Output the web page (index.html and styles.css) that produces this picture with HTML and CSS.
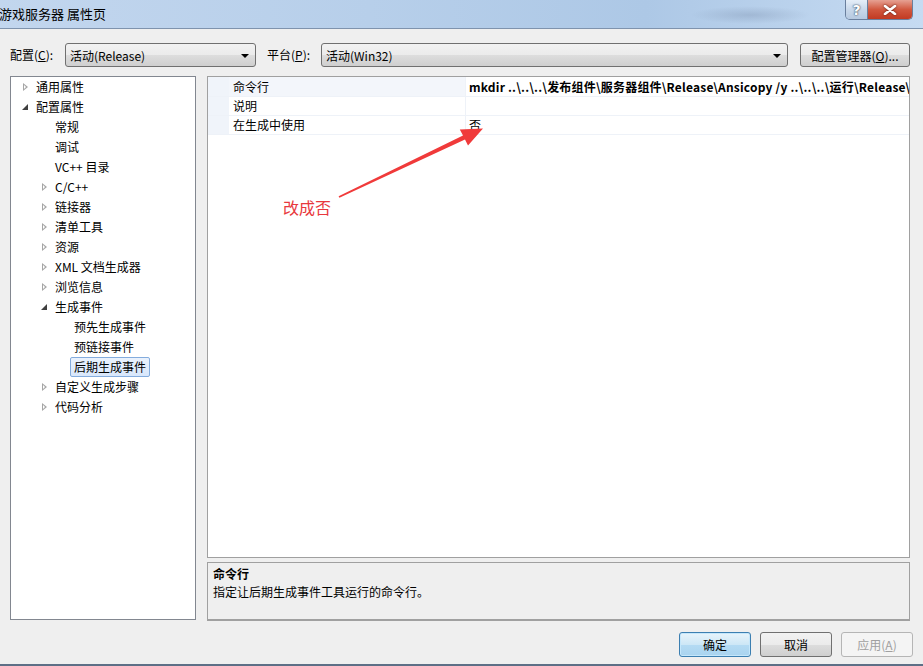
FILE: index.html
```html
<!DOCTYPE html>
<html>
<head>
<meta charset="utf-8">
<link rel="stylesheet" href="styles.css">
</head>
<body>
<div class="window">
  <div class="titlebar">
    <span class="title">游戏服务器 属性页</span>
    <div class="blur"></div>
    <div class="capbtns">
      <div class="capbtn help">?</div>
      <div class="capbtn close">
        <svg width="14" height="10" viewBox="0 0 14 10"><path d="M2 1 L12 9 M12 1 L2 9" stroke="#fff" stroke-width="2.6" stroke-linecap="round"/></svg>
      </div>
    </div>
  </div>
  <div class="content">
    <div class="toprow">
      <span class="lbl">配置(<u>C</u>):</span>
      <div class="combo c1"><span>活动(Release)</span><i class="caret"></i></div>
      <span class="lbl lbl2">平台(<u>P</u>):</span>
      <div class="combo c2"><span>活动(Win32)</span><i class="caret"></i></div>
      <div class="btn cfg">配置管理器(<u>O</u>)...</div>
    </div>
    <div class="main">
      <div class="tree">
        <div class="ti l0"><i class="arr closed"></i>通用属性</div>
        <div class="ti l0"><i class="arr open"></i>配置属性</div>
        <div class="ti l1">常规</div>
        <div class="ti l1">调试</div>
        <div class="ti l1">VC++ 目录</div>
        <div class="ti l1"><i class="arr closed"></i>C/C++</div>
        <div class="ti l1"><i class="arr closed"></i>链接器</div>
        <div class="ti l1"><i class="arr closed"></i>清单工具</div>
        <div class="ti l1"><i class="arr closed"></i>资源</div>
        <div class="ti l1"><i class="arr closed"></i>XML 文档生成器</div>
        <div class="ti l1"><i class="arr closed"></i>浏览信息</div>
        <div class="ti l1"><i class="arr open"></i>生成事件</div>
        <div class="ti l2">预先生成事件</div>
        <div class="ti l2">预链接事件</div>
        <div class="ti l2"><span class="sel">后期生成事件</span></div>
        <div class="ti l1"><i class="arr closed"></i>自定义生成步骤</div>
        <div class="ti l1"><i class="arr closed"></i>代码分析</div>
      </div>
      <div class="right">
        <div class="grid">
          <div class="row first"><div class="gut"></div><div class="name">命令行</div><div class="val bold">mkdir ..\..\..\发布组件\服务器组件\Release\Ansicopy /y ..\..\..\运行\Release\</div></div>
          <div class="row"><div class="gut"></div><div class="name">说明</div><div class="val"></div></div>
          <div class="row"><div class="gut"></div><div class="name">在生成中使用</div><div class="val">否</div></div>
        </div>
        <div class="desc">
          <div class="dtitle">命令行</div>
          <div class="dtext">指定让后期生成事件工具运行的命令行。</div>
        </div>
      </div>
    </div>
    <div class="footer">
      <div class="btn ok">确定</div>
      <div class="btn">取消</div>
      <div class="btn disabled">应用(<u>A</u>)</div>
    </div>
  </div>
  <svg class="annot-arrow" width="923" height="666" viewBox="0 0 923 666">
    <path d="M338.6 196.3 L463 135.6 L459.8 129.6 L483 128.5 L468 145.5 L465 139.6 L339.4 197.7 Z" fill="#f03a3a"/>
  </svg>
  <div class="annot-text">改成否</div>
</div>
</body>
</html>
```

FILE: styles.css
```css
* { box-sizing: border-box; }
html, body { margin: 0; padding: 0; }
body {
  width: 923px; height: 666px; overflow: hidden;
  font-family: "Noto Sans CJK SC", "Microsoft YaHei", sans-serif;
  font-size: 12px; color: #000;
  background: #efefef;
}
u { text-decoration: underline; }
.window { position: relative; width: 923px; height: 666px; background: #efefef; border-bottom: 2px solid #5d6f86; }
.titlebar {
  position: relative; height: 29px;
  background: linear-gradient(90deg, #c2d6ee 0%, #b7cfea 40%, #adc8e6 70%, #c6dbf2 100%);
  border-bottom: 1px solid #7f93ad;
}
.title { position: absolute; left: -1px; top: 5px; font-size: 13px; color: #000; line-height: 18px; }
.blur { position: absolute; left: 690px; top: 6px; width: 120px; height: 18px; background: radial-gradient(ellipse at center, rgba(120,140,170,0.35), rgba(120,140,170,0) 70%); }
.capbtns { position: absolute; right: 10px; top: 0; display: flex; height: 20px; border: 1px solid #6a7f9d; border-top: none; border-radius: 0 0 5px 5px; overflow: hidden; }
.capbtn { height: 19px; display: flex; align-items: center; justify-content: center; }
.help { width: 22px; background: linear-gradient(#e5eef8, #c9d8ea 50%, #b6c9e0); color: #fff; font-weight: bold; font-size: 14px; font-family: "DejaVu Sans", sans-serif; text-shadow: 0 0 2px #34485f, 0 0 1px #34485f; border-right: 1px solid #6a7f9d; }
.close { width: 44px; background: linear-gradient(#e6a193, #d1583f 50%, #c23a22); }
.close svg { filter: drop-shadow(0 0 1px #5a1a10); }
.content { padding: 14px 13px 0 10px; }
.toprow { display: flex; align-items: center; height: 24px; }
.lbl { width: 55px; line-height: 24px; }
.lbl2 { margin-left: 11px; width: 54px; }
.combo {
  position: relative; height: 24px; border: 1px solid #707070; border-radius: 3px;
  background: linear-gradient(#f2f2f2, #ebebeb 50%, #dddddd 51%, #cfcfcf);
  display: flex; align-items: center; padding-left: 4px;
}
.c1 { width: 191px; }
.c2 { width: 467px; }
.caret { position: absolute; right: 6px; top: 10px; width: 0; height: 0; border-left: 4px solid transparent; border-right: 4px solid transparent; border-top: 4px solid #000; }
.btn {
  height: 24px; border: 1px solid #707070; border-radius: 3px;
  background: linear-gradient(#f2f2f2, #ebebeb 50%, #dddddd 51%, #cfcfcf);
  display: flex; align-items: center; justify-content: center;
}
.cfg { width: 110px; margin-left: 12px; }
.main { display: flex; margin-top: 9px; gap: 11px; }
.tree { width: 186px; height: 544px; background: #fff; border: 1px solid #828790; padding-top: 0; }
.ti { position: relative; height: 20px; line-height: 20px; white-space: nowrap; }
.l0 { padding-left: 25px; }
.l1 { padding-left: 44px; }
.l2 { padding-left: 63px; }
.arr { position: absolute; top: 6px; width: 0; height: 0; }
.l0 .arr { left: 12px; }
.l1 .arr { left: 31px; }
.arr.closed { border-top: 4px solid transparent; border-bottom: 4px solid transparent; border-left: 5px solid #a6a6a6; }
.arr.closed::after { content: ""; position: absolute; left: -4px; top: -2px; border-top: 2px solid transparent; border-bottom: 2px solid transparent; border-left: 2.5px solid #fff; }
.arr.open { top: 7px; border-left: 6px solid transparent; border-bottom: 6px solid #404040; margin-left: -1px; }
.sel { display: inline-block; height: 20px; line-height: 18px; padding: 0 3px; margin-left: -4px; background: linear-gradient(#eaf2fd, #d8e7fb); border: 1px solid #84acdd; border-radius: 2px; }
.right { display: flex; flex-direction: column; gap: 4px; }
.grid { width: 703px; height: 482px; background: #fff; border: 1px solid #a0a0a0; padding-top: 0; }
.row { display: flex; height: 19px; line-height: 18px; border-bottom: 1px solid #eef2f8; }
.row.first { height: 20px; line-height: 19px; }
.gut { width: 21px; background: #f0f4fa; }
.name { width: 237px; padding-left: 4px; border-right: 1px solid #eef2f8; }
.row.first .name { background: #f3f6fb; }
.val { flex: 1; padding-left: 3px; white-space: nowrap; overflow: hidden; }
.bold { font-weight: bold; }
.row.first .val { letter-spacing: 0.2px; }
.desc { width: 703px; height: 59px; border: 1px solid #a0a0a0; border-bottom-width: 2px; background: #efefef; padding: 2px 5px; }
.dtitle { font-weight: bold; line-height: 18px; }
.dtext { line-height: 18px; }
.footer { display: flex; justify-content: flex-end; gap: 9px; margin-top: 11px; margin-right: -3px; }
.footer .btn { width: 72px; height: 25px; }
.footer .ok { border-color: #3c7fb1; background: linear-gradient(#e8f4fb, #cde7f6 50%, #b4dbf3 51%, #a9d3ef); box-shadow: inset 0 0 0 1px #c5e7fb; }
.footer .disabled { color: #a0a0a0; border-color: #b5b5b5; background: #f4f4f4; }
.annot-arrow { position: absolute; left: 0; top: 0; pointer-events: none; }
.annot-text { position: absolute; left: 283px; top: 196px; color: #e8383d; font-size: 16px; line-height: 22px; }
```
